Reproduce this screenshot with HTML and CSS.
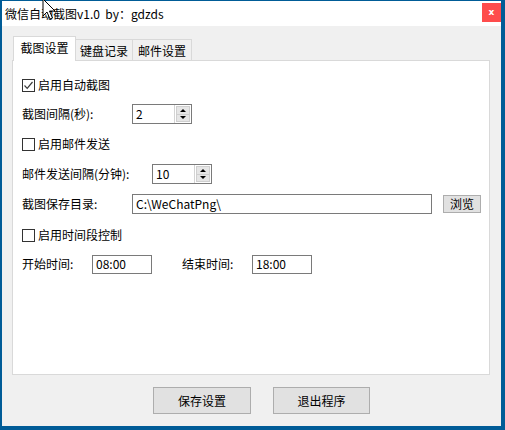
FILE: index.html
```html
<!DOCTYPE html>
<html lang="zh-CN">
<head>
<meta charset="utf-8">
<title>微信自动截图v1.0</title>
<link rel="stylesheet" href="styles.css">
</head>
<body>
<div class="window">
  <div class="titlebar">
    <span class="title">微信自动截图v1.0&nbsp;&nbsp;by：gdzds</span>
    <div class="close">x</div>
  </div>
  <div class="body">
    <div class="tabs">
      <div class="tab active">截图设置</div>
      <div class="tab t2">键盘记录</div>
      <div class="tab t3">邮件设置</div>
    </div>
    <div class="panel">
      <div class="row r1">
        <span class="check checked"><svg width="11" height="11" viewBox="0 0 11 11"><polyline points="1.5,5.5 4.2,8.3 9.5,2" fill="none" stroke="#3a3a3a" stroke-width="1.2"/></svg></span>
        <span class="clabel">启用自动截图</span>
      </div>
      <div class="row r2">
        <span class="label w110">截图间隔(秒):</span>
        <div class="spin"><span class="val">2</span><div class="spinbtns"><div class="sb"><i class="up"></i></div><div class="sb"><i class="down"></i></div></div></div>
      </div>
      <div class="row r3">
        <span class="check"></span>
        <span class="clabel">启用邮件发送</span>
      </div>
      <div class="row r4">
        <span class="label w130">邮件发送间隔(分钟):</span>
        <div class="spin"><span class="val">10</span><div class="spinbtns"><div class="sb"><i class="up"></i></div><div class="sb"><i class="down"></i></div></div></div>
      </div>
      <div class="row r5">
        <span class="label w110">截图保存目录:</span>
        <div class="input dir">C:\WeChatPng\</div>
        <div class="browse">浏览</div>
      </div>
      <div class="row r6">
        <span class="check"></span>
        <span class="clabel">启用时间段控制</span>
      </div>
      <div class="row r7">
        <span class="label w70">开始时间:</span>
        <div class="input time">08:00</div>
        <span class="label w70 gap30">结束时间:</span>
        <div class="input time">18:00</div>
      </div>
    </div>
    <div class="actions">
      <div class="btn b1">保存设置</div>
      <div class="btn b2">退出程序</div>
    </div>
  </div>
  <svg class="cursor" width="14" height="24" viewBox="0 0 14 24"><path d="M1 1 L1 18 L5 14 L8 21 L10.5 20 L7.5 13 L13 13 Z" fill="#fff" stroke="#000" stroke-width="1"/></svg>
</div>
</body>
</html>
```
FILE: styles.css
```css
* { box-sizing: border-box; }
html, body { margin: 0; padding: 0; }
body {
  width: 505px;
  height: 430px;
  background: #005c97;
  font-family: "Noto Sans CJK SC", "Noto Sans", sans-serif;
  font-size: 12px;
  color: #000;
  overflow: hidden;
}
.window {
  position: relative;
  margin: 1px 0 0 2px;
  width: 499px;
  height: 425px;
  background: #f0f0f0;
  display: flex;
  flex-direction: column;
}
.titlebar {
  height: 25px;
  background: #fff;
  display: flex;
  align-items: center;
  padding-left: 3px;
  position: relative;
}
.title { font-size: 12px; line-height: 16px; color: #000; }
.close {
  position: absolute;
  left: 480px;
  top: 2px;
  width: 19px;
  height: 19px;
  background: #fe4c4c;
  color: #fff;
  font-family: "DejaVu Sans", sans-serif;
  font-weight: bold;
  font-size: 9px;
  line-height: 18px;
  text-align: center;
}
.body {
  flex: 1;
  padding: 10px 0 0 10px;
}
.tabs {
  display: flex;
  align-items: flex-end;
  height: 24px;
  padding-left: 1px;
  position: relative;
  z-index: 1;
}
.tab {
  height: 21px;
  background: #f0f0f0;
  border: 1px solid #d9d9d9;
  border-bottom: none;
  display: flex;
  align-items: center;
  justify-content: center;
  line-height: 16px;
  padding-top: 1px;
}
.tab.active {
  width: 63px;
  height: 25px;
  margin-bottom: -1px;
  background: #fff;
  padding-bottom: 3px;
}
.tab.t2 { width: 57px; border-left: none; }
.tab.t3 { width: 59px; border-left: none; }
.panel {
  width: 478px;
  height: 315px;
  background: #fff;
  border: 1px solid #d9d9d9;
  padding: 14px 0 0 9px;
  display: flex;
  flex-direction: column;
}
.row {
  height: 20px;
  display: flex;
  align-items: center;
  line-height: 16px;
}
.r2 { margin-top: 9px; }
.r3, .r4, .r5 { margin-top: 10px; }
.r6 { margin-top: 11px; }
.r7 { margin-top: 9px; }
.check {
  width: 13px;
  height: 13px;
  border: 1px solid #333;
  background: #fff;
  display: flex;
  align-items: center;
  justify-content: center;
}
.clabel { margin-left: 3px; }
.label { flex: none; }
.w110 { width: 110px; }
.w130 { width: 130px; }
.w70 { width: 70px; }
.gap30 { margin-left: 30px; }
.spin {
  width: 60px;
  height: 20px;
  border: 1px solid #7a7a7a;
  background: #fff;
  display: flex;
  align-items: center;
  justify-content: space-between;
}
.val { padding-left: 3px; }
.spinbtns {
  width: 17px;
  height: 18px;
  display: flex;
  flex-direction: column;
  border-left: 1px solid #d4d4d4;
  padding: 1px;
}
.sb {
  flex: 1;
  background: #e6e6e6;
  border: 1px solid #cfcfcf;
  display: flex;
  align-items: center;
  justify-content: center;
}
.sb + .sb { border-top: none; }
.up { width: 0; height: 0; border-left: 3px solid transparent; border-right: 3px solid transparent; border-bottom: 3px solid #000; }
.down { width: 0; height: 0; border-left: 3px solid transparent; border-right: 3px solid transparent; border-top: 3px solid #000; }
.input {
  height: 20px;
  border: 1px solid #7a7a7a;
  background: #fff;
  padding-left: 3px;
  display: flex;
  align-items: center;
}
.dir { width: 300px; }
.time { width: 60px; height: 19px; }
.browse {
  margin-left: 11px;
  width: 38px;
  height: 18px;
  background: #e1e1e1;
  border: 1px solid #adadad;
  display: flex;
  align-items: center;
  justify-content: center;
}
.actions {
  display: flex;
  margin-top: 12px;
  padding-left: 141px;
  gap: 22px;
}
.btn {
  height: 27px;
  background: #e1e1e1;
  border: 1px solid #adadad;
  display: flex;
  align-items: center;
  justify-content: center;
  font-size: 12px;
}
.b1 { width: 98px; }
.b2 { width: 97px; }
.cursor {
  position: absolute;
  left: 40px;
  top: -3px;
}
```
